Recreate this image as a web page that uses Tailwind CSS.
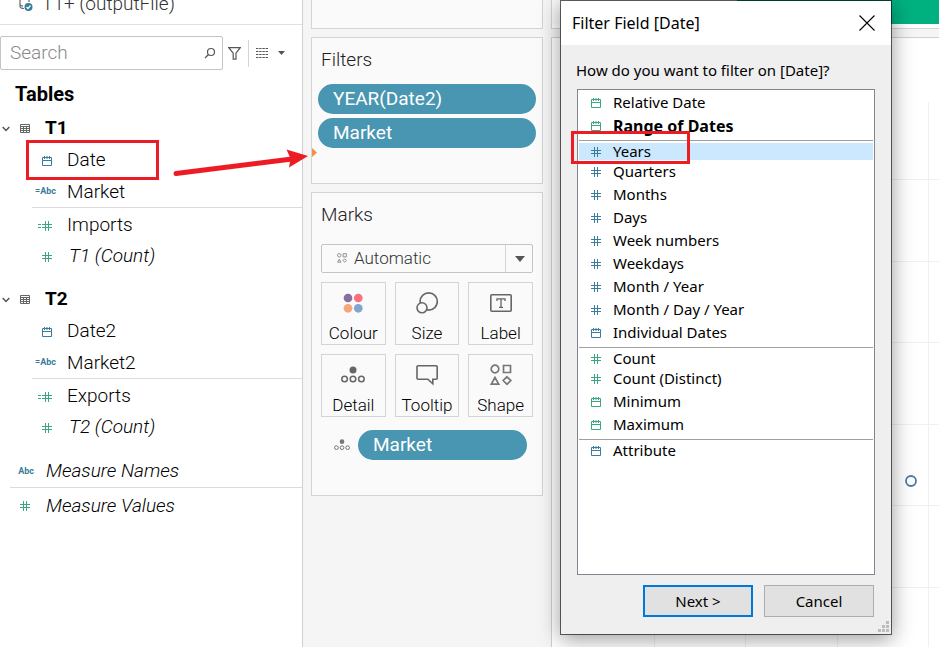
<!DOCTYPE html>
<html lang="en">
<head>
<meta charset="utf-8">
<meta name="viewport" content="width=device-width, initial-scale=1">
<title>Filter Field [Date]</title>
<script src="https://cdn.jsdelivr.net/npm/@tailwindcss/browser@4"></script>
</head>
<body class="relative flex h-screen overflow-hidden bg-[#f5f5f5] font-['Roboto',sans-serif] text-black">

<!-- Shared icon shapes -->
<svg class="hidden" aria-hidden="true">
  <symbol id="calendar" viewBox="0 0 10 10"><path d="M.5 1.500h9v8h-9zM.5 4.500h9M2.500 0v3M5 0v3M7.500 0v3" fill="none" stroke="currentColor"/></symbol>
  <symbol id="hash" viewBox="0 0 10 10"><path d="M3.500 0v10M6.500 0v10M0 3.500h10M0 6.500h10" fill="none" stroke="currentColor"/></symbol>
  <symbol id="eqhash" viewBox="0 0 14 10"><path d="M7.500 0v10M10.500 0v10M4 3.500h10M4 6.500h10M0 3.500h3M0 6.500h3" fill="none" stroke="currentColor"/></symbol>
  <symbol id="table" viewBox="0 0 10 9"><path d="M.5.500h9v8h-9zM.5 2.500h9M.5 4.500h9M.5 6.500h9M3.500 2.500v6M6.500 2.500v6" fill="none" stroke="currentColor"/></symbol>
  <symbol id="chevron" viewBox="0 0 8 6"><path d="M.7 1 4 4.400 7.300 1" fill="none" stroke="currentColor" stroke-width="1.500"/></symbol>
  <symbol id="shapes" viewBox="0 0 22 22"><g fill="none" stroke="currentColor" stroke-width="1.700"><circle cx="5" cy="5" r="3.800"/><path d="M13.500 1.500h7v7h-7zM5 13.500 1.300 20.200h7.400zM17 12.800l3.800 3.700L17 20.300l-3.800-3.800z"/></g></symbol>
  <symbol id="detail" viewBox="0 0 24 18"><circle cx="12" cy="4" r="3.500" fill="currentColor"/><g fill="none" stroke="currentColor" stroke-width="1.500"><circle cx="3.600" cy="13" r="2.800"/><circle cx="12" cy="13" r="2.800"/><circle cx="20.400" cy="13" r="2.800"/></g></symbol>
</svg>

<!-- Data pane -->
<aside class="flex w-[303px] shrink-0 flex-col border-r border-[#cfcfcf] bg-white">
  <header class="flex h-[25px] shrink-0 items-end border-b border-[#e0e0e0] pl-[19px]">
    <svg class="mb-3 h-4 w-4 shrink-0 text-[#666]" viewBox="0 0 16 16" fill="none"><path d="M1 0v10c0 1.500 1.500 2.500 4 2.500M1 8.500c.5 1 1.500 1.500 3 1.700M10 0v6" stroke="currentColor" stroke-width="1.200"/><circle cx="9.500" cy="11" r="4" fill="#3a7c9c"/><path d="m7.500 11 1.500 1.500 2.500-3" stroke="#fff" stroke-width="1.200"/></svg>
    <span class="mb-2 ml-[7px] text-[19px] leading-6 font-light text-[#333]">T1+ (outputFile)</span>
  </header>

  <div class="mt-[11px] flex h-[34px] shrink-0 items-center">
    <label class="flex h-full w-[223px] items-center rounded-xs border border-[#c4c4c4] pr-[6px] pl-[9px]">
      <input type="text" aria-label="Search" placeholder="Search" class="min-w-0 flex-1 text-[19px] font-light outline-none placeholder:text-[#8a8a8a]">
      <svg class="h-3 w-3 text-[#555]" viewBox="0 0 12 12" fill="none" stroke="currentColor" stroke-width="1.200"><circle cx="7" cy="5" r="3.500"/><path d="M4.500 7.500 1 11"/></svg>
    </label>
    <button aria-label="Filter fields" class="ml-[5px] text-[#555]"><svg class="h-[13px] w-[13px]" viewBox="0 0 13 13" fill="none" stroke="currentColor" stroke-width="1.200"><path d="M.8.700h11.400L8 6.200v5.900H5.200V6.200z"/></svg></button>
    <span class="ml-[7px] h-[27px] w-px bg-[#d4d4d4]"></span>
    <button aria-label="View options" class="ml-[7px] flex items-center gap-[10px] text-[#555]">
      <svg class="h-[10px] w-3" viewBox="0 0 12 10" stroke="currentColor" fill="none"><path d="M0 .5h12M0 3.500h12M0 6.500h12M0 9.500h12" stroke-dasharray="2.400 .8"/></svg>
      <svg class="h-1 w-[7px]" viewBox="0 0 7 4"><path d="M0 0h7L3.500 4z" fill="currentColor"/></svg>
    </button>
  </div>

  <h2 class="mt-[10px] h-7 pl-[15px] text-[20px] leading-7 font-bold">Tables</h2>

  <nav class="mt-1 text-[19px] font-light">
    <section>
      <h3 class="flex h-8 items-center pt-px font-bold">
        <button aria-label="Collapse T1" class="ml-[2px] w-[18px] text-[#555]"><svg class="h-[6px] w-2"><use href="#chevron"/></svg></button>
        <svg class="h-[9px] w-[10px] text-[#666]"><use href="#table"/></svg><span class="ml-[15px]">T1</span>
      </h3>
      <ul>
        <li class="flex h-8 items-center gap-[11px] pt-px"><span class="flex w-14 justify-end pr-1 text-[#3a7c9c]"><svg class="h-[10px] w-[10px]"><use href="#calendar"/></svg></span>Date</li>
        <li class="ml-8 flex h-8 items-center gap-[11px] border-b border-[#dcdcdc] pt-px"><span class="flex w-6 justify-end text-[9px] font-bold text-[#3a7c9c]">=Abc</span>Market</li>
        <li class="flex h-[34px] items-center gap-[11px] pt-px"><span class="flex w-14 justify-end pr-1 text-[#3ba67f]"><svg class="h-[10px] w-[14px]"><use href="#eqhash"/></svg></span>Imports</li>
        <li class="flex h-7 items-center gap-[11px] pt-px"><span class="flex w-14 justify-end pr-1 text-[#3ba67f]"><svg class="h-[10px] w-[10px]"><use href="#hash"/></svg></span><i class="pl-[2px]">T1 (Count)</i></li>
      </ul>
    </section>
    <section class="mt-[13px]">
      <h3 class="flex h-8 items-center pt-px font-bold">
        <button aria-label="Collapse T2" class="ml-[2px] w-[18px] text-[#555]"><svg class="h-[6px] w-2"><use href="#chevron"/></svg></button>
        <svg class="h-[9px] w-[10px] text-[#666]"><use href="#table"/></svg><span class="ml-[15px]">T2</span>
      </h3>
      <ul>
        <li class="flex h-8 items-center gap-[11px] pt-px"><span class="flex w-14 justify-end pr-1 text-[#3a7c9c]"><svg class="h-[10px] w-[10px]"><use href="#calendar"/></svg></span>Date2</li>
        <li class="ml-8 flex h-8 items-center gap-[11px] border-b border-[#dcdcdc] pt-px"><span class="flex w-6 justify-end text-[9px] font-bold text-[#3a7c9c]">=Abc</span>Market2</li>
        <li class="flex h-[34px] items-center gap-[11px] pt-px"><span class="flex w-14 justify-end pr-1 text-[#3ba67f]"><svg class="h-[10px] w-[14px]"><use href="#eqhash"/></svg></span>Exports</li>
        <li class="flex h-7 items-center gap-[11px] pt-px"><span class="flex w-14 justify-end pr-1 text-[#3ba67f]"><svg class="h-[10px] w-[10px]"><use href="#hash"/></svg></span><i class="pl-[2px]">T2 (Count)</i></li>
      </ul>
    </section>
    <ul class="mt-[13px] italic">
      <li class="ml-[10px] flex h-[34px] items-center gap-3 border-b border-[#dcdcdc] pt-[2px]"><span class="flex w-6 justify-end text-[9px] font-bold text-[#3a7c9c] not-italic">Abc</span>Measure Names</li>
      <li class="ml-[10px] flex h-[34px] items-center gap-3 pt-[2px]"><span class="flex w-6 justify-end pr-1 text-[#3ba67f]"><svg class="h-[10px] w-[10px]"><use href="#hash"/></svg></span>Measure Values</li>
    </ul>
  </nav>
</aside>

<!-- Shelves -->
<div class="flex w-[248px] shrink-0 flex-col gap-2 px-2 font-light">
  <section aria-label="Pages" class="h-[29px] shrink-0 border border-t-0 border-[#d4d4d4] bg-[#fafafa]"></section>

  <section class="relative flex h-[147px] shrink-0 flex-col border border-[#d4d4d4] bg-[#fafafa] px-[6px]">
    <h2 class="mt-[10px] mb-3 pl-[3px] text-[19px] leading-6 text-[#222]">Filters</h2>
    <div class="flex flex-col gap-1 text-[19px] font-normal text-white">
      <button class="h-[30px] rounded-full bg-[#4996b2] px-[15px] text-left">YEAR(Date2)</button>
      <button class="h-[30px] rounded-full bg-[#4996b2] px-[15px] text-left">Market</button>
    </div>
    <svg class="absolute top-[110px] left-0 h-[9px] w-[5px]" viewBox="0 0 5 9"><path d="M0 0 5 4.500 0 9z" fill="#ee9144"/></svg>
  </section>

  <section class="flex h-[304px] shrink-0 flex-col border border-[#d4d4d4] bg-[#fafafa] px-[9px]">
    <h2 class="mt-[10px] text-[19px] leading-6 text-[#222]">Marks</h2>
    <div class="relative mt-[17px] h-[29px]">
      <select aria-label="Mark type" class="h-full w-full appearance-none rounded-xs border border-[#c4c4c4] bg-[#fafafa] pl-8 text-[17px] text-[#333]"><option>Automatic</option></select>
      <svg class="pointer-events-none absolute top-[9px] left-4 h-[10px] w-[10px] text-[#777]"><use href="#shapes"/></svg>
      <span class="pointer-events-none absolute inset-y-px right-0 flex w-7 items-center justify-center border-l border-[#d4d4d4] text-[#555]"><svg class="h-[6px] w-[10px]" viewBox="0 0 10 6"><path d="M0 0h10L5 6z" fill="currentColor"/></svg></span>
    </div>
    <div class="mt-[9px] grid grid-cols-3 gap-[9px] text-[17px] leading-5">
      <button class="flex h-[63px] flex-col items-center border border-[#d4d4d4] pt-[9px]"><svg class="h-[22px] w-5 overflow-visible" viewBox="0 0 22 22"><circle cx="5.500" cy="5.500" r="4.800" fill="#86709c"/><circle cx="16.800" cy="5.500" r="4.800" fill="#fb7080"/><circle cx="5.500" cy="16.800" r="4.800" fill="#f5a67a"/><circle cx="16.800" cy="16.800" r="4.800" fill="#82a5cb"/></svg><span class="mt-[9px]">Colour</span></button>
      <button class="flex h-[63px] flex-col items-center border border-[#d4d4d4] pt-[9px]"><svg class="h-[22px] w-[22px]" viewBox="0 0 22 22" fill="none" stroke="#666" stroke-width="1.600"><circle cx="12.700" cy="9.500" r="8.600"/><circle cx="6" cy="15.800" r="5" fill="#fafafa"/></svg><span class="mt-[9px]">Size</span></button>
      <button class="flex h-[63px] flex-col items-center border border-[#d4d4d4] pt-[9px]"><svg class="h-[22px] w-[22px]" viewBox="0 0 22 22"><rect x=".8" y="2.800" width="20.400" height="16.400" rx="1" fill="none" stroke="#666" stroke-width="1.600"/><path d="M7 9V6.800h8V9M11 6.800v8.400M9 15.300h4" fill="none" stroke="#666" stroke-width="1.300"/></svg><span class="mt-[9px]">Label</span></button>
      <button class="flex h-[63px] flex-col items-center border border-[#d4d4d4] pt-[9px]"><svg class="mt-[2px] mb-[2px] h-[18px] w-6 text-[#666]"><use href="#detail"/></svg><span class="mt-[9px]">Detail</span></button>
      <button class="flex h-[63px] flex-col items-center border border-[#d4d4d4] pt-[9px]"><svg class="h-[22px] w-[22px]" viewBox="0 0 22 22" fill="none" stroke="#666" stroke-width="1.600"><path d="M2 1.800h18.200a1 1 0 0 1 1 1v11.400a1 1 0 0 1-1 1h-3.400v4.600l-5-4.600H2a1 1 0 0 1-1-1V2.800a1 1 0 0 1 1-1z"/></svg><span class="mt-[9px]">Tooltip</span></button>
      <button class="flex h-[63px] flex-col items-center border border-[#d4d4d4] pt-[9px]"><svg class="h-[22px] w-[22px] text-[#777]"><use href="#shapes"/></svg><span class="mt-[9px]">Shape</span></button>
    </div>
    <div class="mt-[13px] flex items-center pr-[6px] pl-[13px]">
      <svg class="h-3 w-4 text-[#777]"><use href="#detail"/></svg>
      <button class="ml-2 h-[30px] flex-1 rounded-full bg-[#4996b2] px-[15px] text-left text-[19px] font-normal text-white">Market</button>
    </div>
  </section>
</div>

<!-- Worksheet view -->
<main class="flex min-w-0 flex-1 flex-col gap-2">
  <div class="flex h-[29px] shrink-0 flex-col border-b border-l border-[#d4d4d4] bg-[#fafafa]">
    <div class="ml-[185px] h-6 bg-[#00b180]"></div>
    <div class="flex-1 bg-white"></div>
  </div>
  <div class="flex-1 border-t border-l border-[#d0d0d0] bg-white">
    <svg class="h-full w-full" aria-label="Plot">
      <path d="M102.500 64v560M193.500 64v560M285.500 64v560M376.500 64v560M20 141.500h400M20 223.500h400M20 304.500h400M20 386.500h400M20 467.500h400M20 549.500h400" stroke="#f0f0f0" fill="none"/>
      <circle cx="359" cy="443" r="5" fill="#fff" stroke="#4e79a7" stroke-width="1.800"/>
    </svg>
  </div>
</main>

<!-- Filter dialog floating over the worksheet -->
<div role="dialog" aria-labelledby="dlg-title" class="absolute top-0 left-[560px] flex h-[635px] w-[332px] flex-col border border-black/60 bg-[#efefef] bg-clip-padding font-['Noto_Sans',sans-serif] text-[15px] shadow-[0_4px_20px_rgba(0,0,0,0.4)]">
  <header class="flex h-11 shrink-0 items-center justify-between bg-white pr-4 pl-[11px]">
    <h1 id="dlg-title" class="text-[16px]">Filter Field [Date]</h1>
    <button aria-label="Close"><svg class="h-4 w-4" viewBox="0 0 16 16"><path d="m.5.500 15 15M15.500.500l-15 15" stroke="#000" stroke-width="1.100"/></svg></button>
  </header>
  <p id="dlg-q" class="mt-[15px] mb-[9px] px-[15px] leading-5">How do you want to filter on [Date]?</p>
  <ul role="listbox" aria-labelledby="dlg-q" class="mx-4 h-[486px] shrink-0 border border-[#82858f] bg-white px-px pt-px">
    <li role="option" class="flex h-[23px] items-center gap-3 pl-3"><svg class="h-[10px] w-[10px] text-[#3ba67f]"><use href="#calendar"/></svg>Relative Date</li>
    <li role="option" class="flex h-[23px] items-center gap-3 pl-3 text-[16px] font-bold"><svg class="h-[10px] w-[10px] text-[#3ba67f]"><use href="#calendar"/></svg>Range of Dates</li>
    <li role="separator" class="mt-[3px] mb-[2px] h-px bg-[#a0a0a0]"></li>
    <li role="option" aria-selected="true" class="flex h-[17px] items-center gap-3 bg-[#cce8ff] pl-3"><svg class="h-[10px] w-[10px] text-[#3a7c9c]"><use href="#hash"/></svg>Years</li>
    <li role="option" class="flex h-[23px] items-center gap-3 pl-3"><svg class="h-[10px] w-[10px] text-[#3a7c9c]"><use href="#hash"/></svg>Quarters</li>
    <li role="option" class="flex h-[23px] items-center gap-3 pl-3"><svg class="h-[10px] w-[10px] text-[#3a7c9c]"><use href="#hash"/></svg>Months</li>
    <li role="option" class="flex h-[23px] items-center gap-3 pl-3"><svg class="h-[10px] w-[10px] text-[#3a7c9c]"><use href="#hash"/></svg>Days</li>
    <li role="option" class="flex h-[23px] items-center gap-3 pl-3"><svg class="h-[10px] w-[10px] text-[#3a7c9c]"><use href="#hash"/></svg>Week numbers</li>
    <li role="option" class="flex h-[23px] items-center gap-3 pl-3"><svg class="h-[10px] w-[10px] text-[#3a7c9c]"><use href="#hash"/></svg>Weekdays</li>
    <li role="option" class="flex h-[23px] items-center gap-3 pl-3"><svg class="h-[10px] w-[10px] text-[#3a7c9c]"><use href="#hash"/></svg>Month / Year</li>
    <li role="option" class="flex h-[23px] items-center gap-3 pl-3"><svg class="h-[10px] w-[10px] text-[#3a7c9c]"><use href="#hash"/></svg>Month / Day / Year</li>
    <li role="option" class="flex h-[23px] items-center gap-3 pl-3"><svg class="h-[10px] w-[10px] text-[#3a7c9c]"><use href="#calendar"/></svg>Individual Dates</li>
    <li role="separator" class="mt-[3px] mb-[2px] h-px bg-[#a0a0a0]"></li>
    <li role="option" class="flex h-[17px] items-center gap-3 pl-3"><svg class="h-[10px] w-[10px] text-[#3ba67f]"><use href="#hash"/></svg>Count</li>
    <li role="option" class="flex h-[23px] items-center gap-3 pl-3"><svg class="h-[10px] w-[10px] text-[#3ba67f]"><use href="#hash"/></svg>Count (Distinct)</li>
    <li role="option" class="flex h-[23px] items-center gap-3 pl-3"><svg class="h-[10px] w-[10px] text-[#3ba67f]"><use href="#calendar"/></svg>Minimum</li>
    <li role="option" class="flex h-[23px] items-center gap-3 pl-3"><svg class="h-[10px] w-[10px] text-[#3ba67f]"><use href="#calendar"/></svg>Maximum</li>
    <li role="separator" class="mt-[3px] mb-[2px] h-px bg-[#a0a0a0]"></li>
    <li role="option" class="flex h-[17px] items-center gap-3 pl-3"><svg class="h-[10px] w-[10px] text-[#3a7c9c]"><use href="#calendar"/></svg>Attribute</li>
  </ul>
  <footer class="mt-[10px] flex justify-end gap-[11px] pr-[17px]">
    <button class="h-8 w-[110px] border-2 border-[#0078d7] bg-[#e1e1e1]">Next &gt;</button>
    <button class="h-8 w-[110px] border border-[#adadad] bg-[#e1e1e1]">Cancel</button>
  </footer>
  <svg class="absolute right-[2px] bottom-[2px] h-[11px] w-[11px]" viewBox="0 0 11 11" fill="#bdbdbd"><path d="M8 0h3v3H8zM4 4h3v3H4zM8 4h3v3H8zM0 8h3v3H0zM4 8h3v3H4zM8 8h3v3H8z"/></svg>
</div>

<!-- Callout annotations -->
<div class="pointer-events-none absolute top-[140px] left-[26px] h-10 w-[133px] border-3 border-[#ed1c24]"></div>
<div class="pointer-events-none absolute top-[131px] left-[571px] h-[33px] w-[119px] border-3 border-[#ed1c24]"></div>
<svg class="pointer-events-none absolute top-[145px] left-[170px] h-9 w-[140px]" viewBox="0 0 140 36"><path d="M6 28.500 122 14" stroke="#ed1c24" stroke-width="5" stroke-linecap="round"/><path d="M138 11 116.500 4.500 120.500 13.500 119 22.500z" fill="#ed1c24"/></svg>
</body>
</html>
